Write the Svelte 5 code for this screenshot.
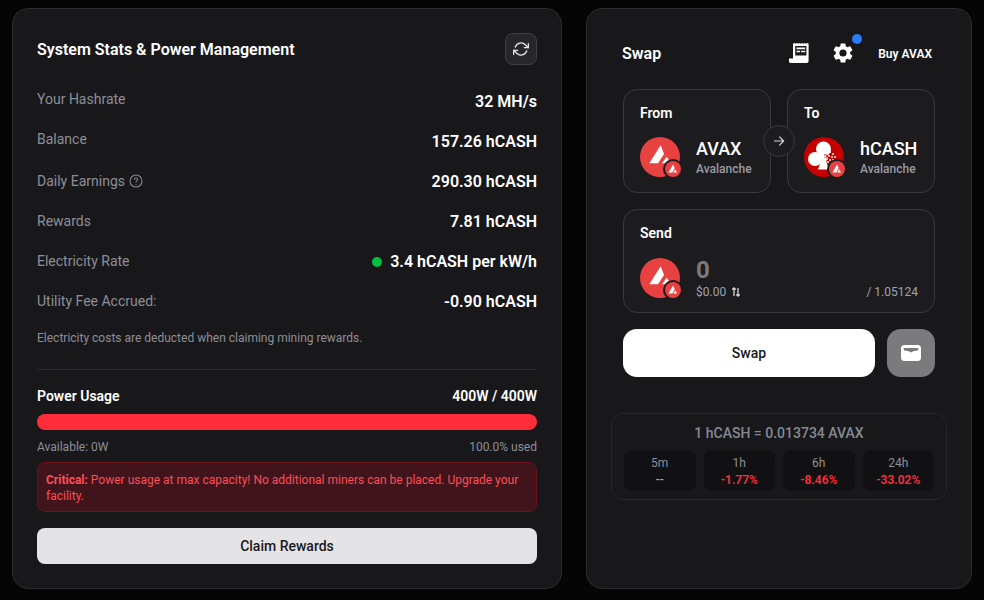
<script>
  const rows = [
    { label: "Your Hashrate", value: "32 MH/s", top: true },
    { label: "Balance", value: "157.26 hCASH", top: true },
    { label: "Daily Earnings", value: "290.30 hCASH", help: true },
    { label: "Rewards", value: "7.81 hCASH" },
    { label: "Electricity Rate", value: "3.4 hCASH per kW/h", dot: true },
    { label: "Utility Fee Accrued:", value: "-0.90 hCASH" }
  ];
  const changes = [
    { time: "5m", value: "--", flat: true },
    { time: "1h", value: "-1.77%" },
    { time: "6h", value: "-8.46%" },
    { time: "24h", value: "-33.02%" }
  ];
</script>

{#snippet avax()}
  <svg class="logo" viewBox="0 0 40 40">
    <circle cx="20" cy="20" r="20" fill="#e84142" />
    <path d="M20.700 8.300 9.300 26.300H18L24 17z" fill="#fff" />
    <path d="M26.700 19.700 22 26.300h9z" fill="#fff" />
  </svg>
{/snippet}

{#snippet badge()}
  <svg class="badge" viewBox="0 0 20 20">
    <circle cx="10" cy="10" r="10" fill="#1c1c1f" />
    <circle cx="10" cy="10" r="8" fill="#e84142" />
    <path d="M10 5.500 5.500 13.500h3.800l2.400-4.500z" fill="#fff" />
    <path d="M12.200 10.200 10.300 13.500h3.800z" fill="#fff" />
  </svg>
{/snippet}

{#snippet hcash()}
  <svg class="logo" viewBox="0 0 40 40">
    <circle cx="20" cy="20" r="20" fill="#c40000" />
    <circle cx="19.500" cy="12" r="7.500" fill="#fff" />
    <circle cx="11" cy="22" r="7" fill="#fff" />
    <path d="M17 17h5l.5 8 2.500 7.500H14l2.500-7.500z" fill="#fff" />
    <path d="M22 15h2v2h-2zM25 14h2v2h-2zM28 16h2v2h-2zM24 18h2v2h-2zM27 19h2v2h-2zM30 19h2v2h-2zM22 21h2v2h-2zM25 22h2v2h-2zM28 22h2v2h-2zM23 24h2v2h-2z" fill="#fff" opacity=".7" />
    <path d="M20 17h3v2h-3zM20 20h4v1h-4z" fill="#e88" />
  </svg>
{/snippet}

<main class="page">
  <section class="card stats">
    <header class="stats__head">
      <h2>System Stats &amp; Power Management</h2>
      <button class="refresh" aria-label="Refresh">
        <svg viewBox="0 0 24 24" width="16" height="16" fill="none" stroke="currentColor" stroke-width="2" stroke-linecap="round" stroke-linejoin="round">
          <path d="M23 4v6h-6M1 20v-6h6" />
          <path d="M3.500 9a9 9 0 0 1 14.900-3.400L23 10M1 14l4.600 4.400A9 9 0 0 0 20.500 15" />
        </svg>
      </button>
    </header>

    <div class="rows">
      {#each rows as row}
        <div class="row" class:row--top={row.top}>
          <span class="row__label">
            {row.label}
            {#if row.help}
              <svg viewBox="0 0 14 14" width="14" height="14" fill="none" stroke="#85858c" stroke-width="1.100" stroke-linecap="round">
                <circle cx="7" cy="7" r="6" />
                <path d="M5.400 5.500a1.600 1.600 0 1 1 2.400 1.400c-.5.300-.8.600-.8 1.200" />
                <path d="M7 10.200v.1" />
              </svg>
            {/if}
          </span>
          <span class="row__value">
            {#if row.dot}<i class="dot"></i>{/if}
            {row.value}
          </span>
        </div>
      {/each}
    </div>

    <p class="note">Electricity costs are deducted when claiming mining rewards.</p>
    <hr />

    <div class="power">
      <div class="power__head">
        <strong>Power Usage</strong>
        <strong>400W / 400W</strong>
      </div>
      <div class="bar"></div>
      <div class="power__foot">
        <span>Available: 0W</span>
        <span>100.0% used</span>
      </div>
    </div>

    <div class="alert">
      <b>Critical:</b> Power usage at max capacity! No additional miners can be placed. Upgrade your facility.
    </div>

    <button class="claim">Claim Rewards</button>
  </section>

  <section class="card swap">
    <div class="swap__main">
      <header class="swap__head">
        <h2>Swap</h2>
        <div class="swap__tools">
          <svg class="receipt" viewBox="0 0 20 20" width="20" height="20">
            <path fill="#fff" d="M4 .8 5.300 0l1.300.8L7.900 0l1.300.8L10.500 0l1.300.8L13.100 0l1.300.8L15.700 0l1.300.8L18.300 0l1.300.8V18c0 1.200-.8 2-2 2H2c-1.200 0-2-.8-2-1.800V15.500h4z" />
            <path fill="#1a1a1d" d="M6.200 3H17.400v9.500H6.200z" />
            <path fill="#fff" d="M7.500 4.600h8.700v1.600H7.500zM7.500 7.700h3.600v1.600H7.500zM12.100 7.700h4.100v1.600h-4.100z" />
          </svg>
          <span class="gear">
            <svg viewBox="0 0 24 24" width="24" height="24" fill="#fff">
              <path d="M19.140 12.940c.04-.3.060-.61.060-.94s-.02-.64-.07-.94l2.030-1.580a.49.490 0 0 0 .12-.61l-1.920-3.320a.49.490 0 0 0-.59-.22l-2.390.96a7 7 0 0 0-1.620-.94l-.36-2.540a.48.480 0 0 0-.48-.41h-3.840a.48.480 0 0 0-.47.410l-.36 2.540c-.59.24-1.130.57-1.620.94l-2.390-.96a.49.490 0 0 0-.59.220L2.740 8.870a.48.480 0 0 0 .12.610l2.030 1.580c-.05.3-.09.63-.09.94s.02.64.07.94l-2.030 1.580a.49.490 0 0 0-.12.610l1.920 3.320c.12.22.37.29.59.22l2.390-.96c.5.380 1.030.7 1.620.94l.36 2.540c.05.24.24.41.48.41h3.840c.24 0 .44-.17.47-.41l.36-2.540c.59-.24 1.130-.56 1.620-.94l2.390.96c.22.08.47 0 .59-.22l1.920-3.320a.47.47 0 0 0-.12-.61zM12 15.600a3.600 3.600 0 1 1 0-7.200 3.600 3.600 0 0 1 0 7.200z" />
            </svg>
            <i class="gear__dot"></i>
          </span>
          <span class="buy">Buy AVAX</span>
        </div>
      </header>

      <div class="pair">
        <div class="box">
          <h3>From</h3>
          <div class="token">
            <div class="icon">{@render avax()}{@render badge()}</div>
            <div class="token__text"><b>AVAX</b><small>Avalanche</small></div>
          </div>
        </div>
        <div class="box">
          <h3>To</h3>
          <div class="token">
            <div class="icon">{@render hcash()}{@render badge()}</div>
            <div class="token__text"><b>hCASH</b><small>Avalanche</small></div>
          </div>
        </div>
        <span class="flip">
          <svg viewBox="0 0 24 24" width="14" height="14" fill="none" stroke="#d4d4d8" stroke-width="2" stroke-linecap="round" stroke-linejoin="round">
            <path d="M4 12h16M13 5l7 7-7 7" />
          </svg>
        </span>
      </div>

      <div class="box send">
        <h3>Send</h3>
        <div class="token">
          <div class="icon">{@render avax()}{@render badge()}</div>
          <div class="send__amount">
            <b>0</b>
            <div class="send__foot">
              <span class="send__usd">
                $0.00
                <svg viewBox="0 0 10 12" width="10" height="12" fill="none" stroke="#e4e4e7" stroke-width="1.200">
                  <path d="M3 10V2M1.200 3.600 3 1.800l1.800 1.800M7 2v8M5.200 8.400 7 10.200l1.800-1.800" />
                </svg>
              </span>
              <span>/ 1.05124</span>
            </div>
          </div>
        </div>
      </div>

      <div class="actions">
        <button class="swap__btn">Swap</button>
        <button class="wallet" aria-label="Wallet">
          <svg viewBox="0 0 20 16" width="20" height="16">
            <rect width="20" height="16" rx="3.500" fill="#fff" />
            <path d="M2.500 3h15l-.6 2.500c-2.500.2-4.500.5-6.900 2-2.400-1.500-4.400-1.800-6.900-2z" fill="#7b7b7e" />
          </svg>
        </button>
      </div>
    </div>

    <div class="rate">
      <p>1 hCASH = 0.013734 AVAX</p>
      <div class="changes">
        {#each changes as c}
          <div class="chip">
            <span>{c.time}</span>
            <b class:flat={c.flat}>{c.value}</b>
          </div>
        {/each}
      </div>
    </div>
  </section>
</main>

<style>
  :global(body) {
    background: #050506;
  }

  .page {
    display: grid;
    grid-template-columns: 550px 386px;
    gap: 24px;
    height: 600px;
    box-sizing: border-box;
    padding: 8px 12px 11px;
    overflow: hidden;
    font-family: Roboto, sans-serif;
    color: #fff;
  }

  .card {
    box-sizing: border-box;
    background: #18181b;
    border: 1px solid #2c2c30;
    border-radius: 16px;
  }

  h2, h3, p { margin: 0; }

  button {
    font-family: inherit;
    border: none;
    cursor: pointer;
  }

  /* left card */
  .stats {
    padding: 24px;
  }

  .stats__head {
    display: flex;
    justify-content: space-between;
    align-items: center;
    height: 32px;
    margin-bottom: 25px;
  }

  .stats__head h2 {
    font-size: 16px;
    font-weight: 600;
  }

  .refresh {
    display: flex;
    align-items: center;
    justify-content: center;
    width: 32px;
    height: 32px;
    padding: 0;
    color: #e4e4e7;
    background: #27272a;
    border: 1px solid #3f3f46;
    border-radius: 8px;
  }

  .rows {
    display: flex;
    flex-direction: column;
    gap: 16px;
  }

  .row {
    display: flex;
    justify-content: space-between;
    align-items: center;
    height: 24px;
  }

  .row__label {
    display: inline-flex;
    align-items: center;
    gap: 4px;
    padding-bottom: 2px;
    font-size: 14px;
    line-height: 20px;
    color: #8e8e96;
  }

  .row--top { align-items: flex-start; }

  .row--top .row__label {
    padding-bottom: 0;
    line-height: 18px;
  }

  .row__value {
    display: inline-flex;
    align-items: center;
    gap: 8px;
    font-size: 16px;
    font-weight: 600;
    line-height: 24px;
  }

  .dot {
    width: 10px;
    height: 10px;
    border-radius: 50%;
    background: #00c040;
  }

  .note {
    margin-top: 15px;
    font-size: 12px;
    line-height: 18px;
    color: #8e8e96;
  }

  hr {
    margin: 22px 0 0;
    border: none;
    border-top: 1px solid #2c2c30;
  }

  .power { margin-top: 16px; }

  .power__head {
    display: flex;
    justify-content: space-between;
    font-size: 14px;
    line-height: 20px;
  }

  .power__head strong { font-weight: 600; }

  .bar {
    height: 16px;
    margin-top: 8px;
    border-radius: 8px;
    background: #ff2d3a;
  }

  .power__foot {
    display: flex;
    justify-content: space-between;
    margin-top: 9px;
    font-size: 12px;
    line-height: 16px;
    color: #8e8e96;
  }

  .alert {
    box-sizing: border-box;
    height: 50px;
    margin-top: 7px;
    padding: 9px 8px 0;
    font-size: 12px;
    line-height: 16px;
    color: #ff4d57;
    background: #41131a;
    border: 1px solid #6e111b;
    border-radius: 8px;
  }

  .alert b { font-weight: 700; }

  .claim {
    display: block;
    width: 100%;
    height: 36px;
    margin-top: 16px;
    padding-top: 0;
    font-size: 14px;
    font-weight: 500;
    color: #18181b;
    background: #e4e4e7;
    border-radius: 8px;
  }

  /* right card */
  .swap {
    padding: 0 24px;
  }

  .swap__main {
    padding: 8px 12px 0;
  }

  .swap__head {
    display: flex;
    justify-content: space-between;
    align-items: center;
    height: 72px;
  }

  .swap__head h2 {
    font-size: 16px;
    font-weight: 600;
    margin-left: -1px;
  }

  .swap__tools {
    display: flex;
    align-items: center;
  }

  .receipt { margin-right: 22px; }

  .gear {
    position: relative;
    display: flex;
    margin-right: 23px;
  }

  .gear__dot {
    position: absolute;
    top: -7px;
    right: -7px;
    width: 10px;
    height: 10px;
    border-radius: 50%;
    background: #2b7bff;
  }

  .buy {
    margin-right: 3px;
    padding-top: 1px;
    font-size: 12px;
    font-weight: 600;
  }

  .pair {
    position: relative;
    display: grid;
    grid-template-columns: 148px 148px;
    gap: 16px;
  }

  .box {
    box-sizing: border-box;
    height: 104px;
    padding: 13px 16px 0;
    background: #1c1c1f;
    border: 1px solid #3a3a3e;
    border-radius: 14px;
  }

  .box h3 {
    font-size: 14px;
    font-weight: 600;
    line-height: 20px;
    margin-bottom: 13px;
  }

  .token {
    display: flex;
    align-items: center;
    gap: 16px;
  }

  .icon {
    position: relative;
    width: 40px;
    height: 40px;
    flex: none;
  }

  .logo {
    display: block;
    width: 40px;
    height: 40px;
  }

  .badge {
    position: absolute;
    right: -3px;
    bottom: -2px;
    width: 20px;
    height: 20px;
  }

  .token__text {
    display: flex;
    flex-direction: column;
    margin-top: 1px;
  }

  .token__text b {
    font-size: 18px;
    font-weight: 500;
    line-height: 24px;
  }

  .token__text small {
    font-size: 12px;
    font-weight: 500;
    line-height: 16px;
    color: #9a9aa2;
  }

  .flip {
    position: absolute;
    left: 140px;
    top: 36px;
    box-sizing: border-box;
    display: flex;
    align-items: center;
    justify-content: center;
    width: 32px;
    height: 32px;
    background: #1c1c1f;
    border: 1px solid #3a3a3e;
    border-radius: 50%;
  }

  .send { margin-top: 16px; }

  .send__amount {
    flex: 1;
  }

  .send__amount b {
    display: block;
    font-size: 24px;
    font-weight: 700;
    line-height: 28px;
    color: #7a7a7e;
  }

  .send__foot {
    display: flex;
    justify-content: space-between;
    font-size: 12px;
    line-height: 16px;
    color: #9ca3af;
  }

  .send__usd {
    display: inline-flex;
    align-items: center;
    gap: 5px;
  }

  .actions {
    display: flex;
    gap: 12px;
    margin-top: 16px;
  }

  .swap__btn {
    flex: 1;
    height: 48px;
    padding-top: 0;
    font-size: 14px;
    font-weight: 500;
    color: #18181b;
    background: #fff;
    border-radius: 14px;
  }

  .wallet {
    display: flex;
    align-items: center;
    justify-content: center;
    width: 48px;
    height: 48px;
    padding: 0;
    background: #7b7b7e;
    border-radius: 14px;
  }

  .rate {
    box-sizing: border-box;
    height: 87px;
    margin-top: 36px;
    padding: 10px 12px 0;
    border: 1px solid #27272a;
    border-radius: 12px;
  }

  .rate p {
    font-size: 14px;
    font-weight: 500;
    line-height: 18px;
    text-align: center;
    color: #858a94;
  }

  .changes {
    display: grid;
    grid-template-columns: repeat(4, 1fr);
    gap: 8px;
    margin-top: 8px;
  }

  .chip {
    box-sizing: border-box;
    display: flex;
    flex-direction: column;
    align-items: center;
    justify-content: center;
    height: 41px;
    padding-top: 3px;
    background: #111113;
    border-radius: 8px;
    font-size: 12px;
    line-height: 17px;
    color: #8e8e96;
  }

  .chip b {
    font-size: 12px;
    font-weight: 600;
    color: #ff2d3a;
  }

  .chip b.flat {
    font-weight: 500;
    color: #a1a1aa;
  }
</style>
